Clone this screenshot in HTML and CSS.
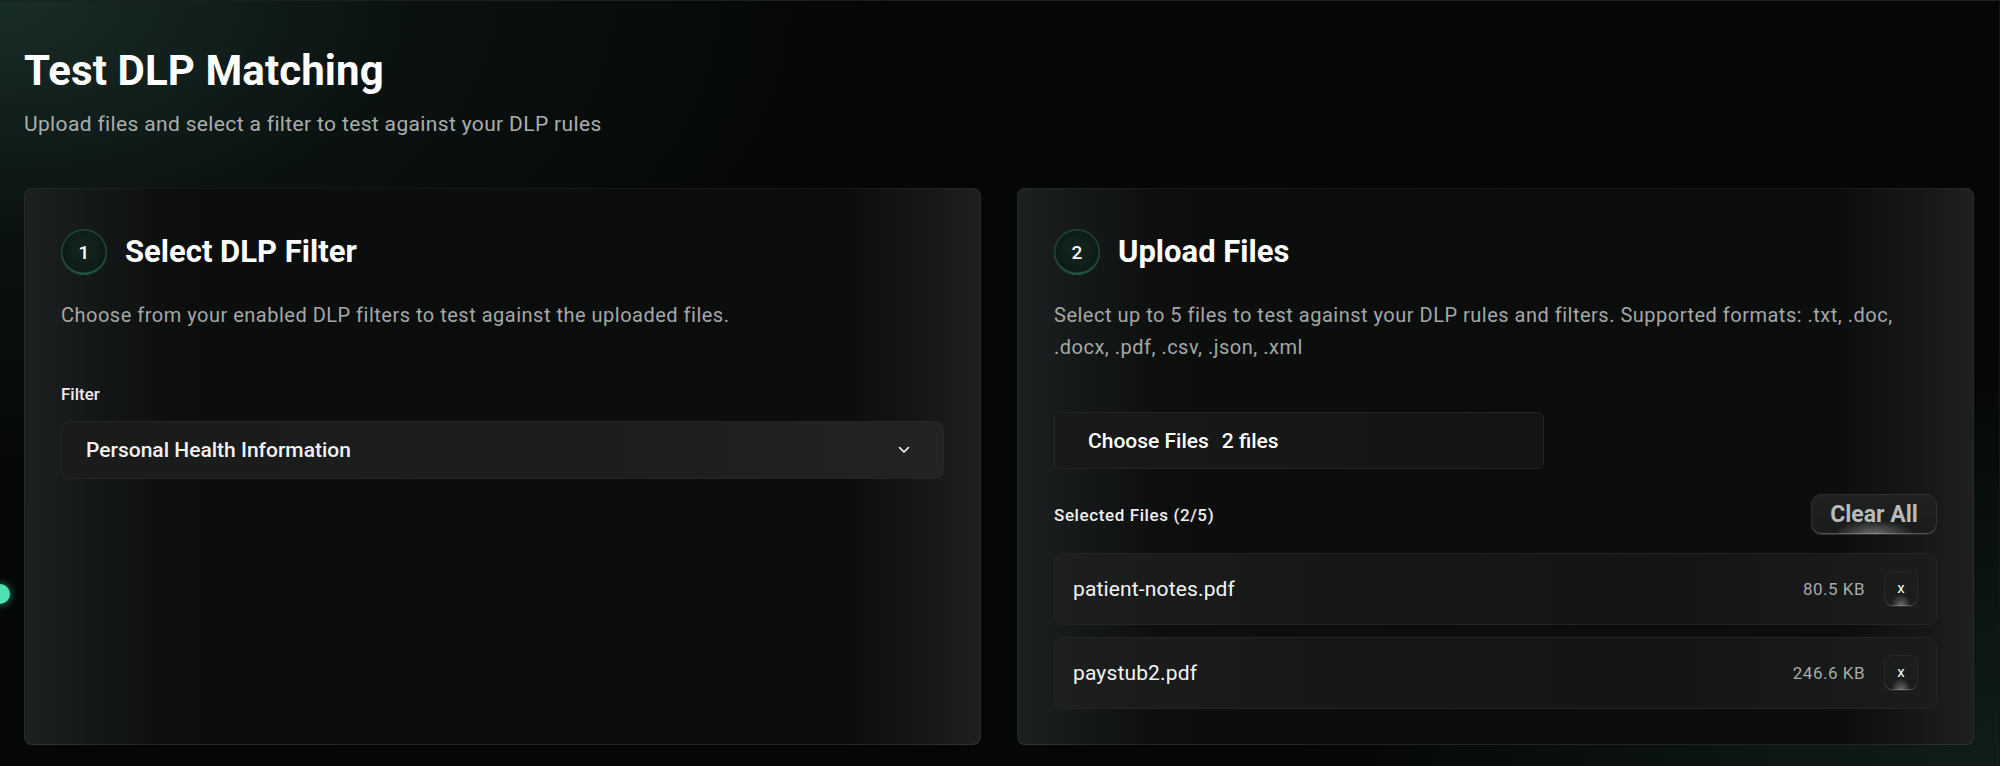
FILE: index.html
```html
<!DOCTYPE html>
<html lang="en">
<head>
<meta charset="utf-8">
<title>Test DLP Matching</title>
<link rel="stylesheet" href="styles.css">
</head>
<body>
<div class="page">
  <header class="page-head">
    <h1 class="page-title">Test DLP Matching</h1>
    <p class="page-sub">Upload files and select a filter to test against your DLP rules</p>
  </header>

  <div class="grid">
    <section class="card">
      <div class="card-head">
        <span class="step">1</span>
        <h2 class="card-title">Select DLP Filter</h2>
      </div>
      <p class="card-desc">Choose from your enabled DLP filters to test against the uploaded files.</p>
      <label class="field-label">Filter</label>
      <div class="select">
        <span class="select-value">Personal Health Information</span>
        <svg class="chev" width="12" height="8" viewBox="0 0 12 8"><path d="M1.5 1.5 L6 6 L10.5 1.5" fill="none" stroke="#fff" stroke-width="1.6" stroke-linecap="round" stroke-linejoin="round"/></svg>
      </div>
    </section>

    <section class="card">
      <div class="card-head">
        <span class="step">2</span>
        <h2 class="card-title">Upload Files</h2>
      </div>
      <p class="card-desc">Select up to 5 files to test against your DLP rules and filters. Supported formats: .txt, .doc, .docx, .pdf, .csv, .json, .xml</p>
      <div class="file-input">
        <span class="file-btn">Choose Files</span>
        <span class="file-count">2 files</span>
      </div>
      <div class="sel-head">
        <span class="sel-title">Selected Files (2/5)</span>
        <button class="btn-clear">Clear All</button>
      </div>
      <ul class="files">
        <li class="file-row">
          <span class="file-name">patient-notes.pdf</span>
          <span class="file-size">80.5 KB</span>
          <button class="btn-x">x</button>
        </li>
        <li class="file-row">
          <span class="file-name">paystub2.pdf</span>
          <span class="file-size">246.6 KB</span>
          <button class="btn-x">x</button>
        </li>
      </ul>
    </section>
  </div>
  <span class="edge-dot"></span>
</div>
</body>
</html>
```

FILE: styles.css
```css
* { box-sizing: border-box; }
html, body { margin: 0; padding: 0; }
body {
  width: 2000px;
  height: 766px;
  overflow: hidden;
  background: #050606;
  font-family: Roboto, "Liberation Sans", sans-serif;
  color: #fff;
}
.page {
  position: relative;
  height: 766px;
  border-top: 1px solid #1c1f1f;
  border-right: 1px solid #121615;
  padding: 45px 25px 0 24px;
  background:
    radial-gradient(ellipse 900px 520px at 0 0, rgba(28,52,46,0.85) 0%, rgba(16,30,27,0.5) 45%, rgba(5,6,6,0) 100%),
    radial-gradient(ellipse 700px 420px at 100% 100%, rgba(20,40,35,0.7) 0%, rgba(5,6,6,0) 100%),
    #050606;
}
.page-title {
  margin: 0;
  font-size: 42px;
  line-height: 50px;
  font-weight: 700;
  letter-spacing: 0.1px;
}
.page-sub {
  margin: 14px 0 0;
  font-size: 21px;
  line-height: 28px;
  letter-spacing: 0.35px;
  color: #a9aeac;
}
.grid {
  margin-top: 50px;
  display: grid;
  grid-template-columns: 1fr 1fr;
  gap: 36px;
}
.card {
  height: 557px;
  padding: 40px 36px 36px;
  border-radius: 8px;
  border: 1px solid rgba(255,255,255,0.05);
  border-bottom-color: rgba(255,255,255,0.09);
  background: linear-gradient(90deg, #1d2020 0%, #161919 6%, #0d0f0f 15%, #0b0d0d 50%, #0c0e0e 86%, #181a1a 96%, #1e2020 100%);
}
.card-head {
  display: flex;
  align-items: center;
  gap: 18px;
  height: 46px;
}
.step {
  width: 46px;
  height: 46px;
  border-radius: 50%;
  display: flex;
  align-items: center;
  justify-content: center;
  font-size: 19px;
  font-weight: 500;
  background: radial-gradient(circle at 50% 45%, #13261f 0%, #0d1a16 70%, #0b1512 100%);
  box-shadow: inset 0 0 0 1.5px #1d4538, inset 0 -2px 1px #3c8d6f;
}
.card-title {
  margin: 0;
  font-size: 31px;
  line-height: 36px;
  font-weight: 700;
}
.card-desc {
  margin: 24px 0 0;
  font-size: 20px;
  line-height: 32px;
  letter-spacing: 0.5px;
  color: #a4a8a6;
}
.field-label {
  display: block;
  margin-top: 53px;
  font-size: 17px;
  line-height: 20px;
  font-weight: 500;
  color: #ececec;
}
.select {
  margin-top: 17px;
  height: 58px;
  display: flex;
  align-items: center;
  justify-content: space-between;
  padding: 0 33px 0 24px;
  border-radius: 8px;
  border: 1px solid #242626;
  background: linear-gradient(90deg, #1a1b1b 0%, #1c1d1d 60%, #222323 100%);
}
.select-value {
  font-size: 21px;
  font-weight: 500;
  color: #f2f2f2;
}
.file-input {
  margin-top: 49px;
  width: 490px;
  height: 57px;
  display: flex;
  align-items: center;
  gap: 13px;
  padding-left: 33px;
  border-radius: 6px;
  border: 1px solid #232525;
  background: linear-gradient(90deg, #181919 0%, #151616 60%, #121313 100%);
  font-size: 21px;
  font-weight: 500;
}
.sel-head {
  margin-top: 25px;
  display: flex;
  align-items: center;
  justify-content: space-between;
}
.sel-title {
  font-size: 17px;
  font-weight: 500;
  letter-spacing: 0.6px;
  color: #f0f0f0;
}
.btn-clear {
  width: 126px;
  height: 41px;
  padding: 0;
  border-radius: 10px;
  border: 1px solid #2e3030;
  background:
    radial-gradient(ellipse 40px 14px at 50% 100%, rgba(255,255,255,0.35) 0%, rgba(255,255,255,0) 100%),
    linear-gradient(180deg, #202121 0%, #1a1b1b 100%);
  box-shadow: inset 0 -1px 0 rgba(255,255,255,0.25);
  font-family: inherit;
  font-size: 23px;
  font-weight: 700;
  color: #b8bbba;
}
.files {
  list-style: none;
  margin: 18px 0 0;
  padding: 0;
  display: flex;
  flex-direction: column;
  gap: 12px;
}
.file-row {
  height: 72px;
  display: flex;
  align-items: center;
  padding: 0 18px;
  border-radius: 8px;
  border: 1px solid #232525;
  background: linear-gradient(90deg, #1d1f1f 0%, #161717 30%, #141515 70%, #1b1c1c 100%);
}
.file-name {
  flex: 1;
  font-size: 21px;
  letter-spacing: 0.15px;
  color: #f4f4f4;
}
.file-size {
  font-size: 17px;
  letter-spacing: 0.5px;
  color: #a8abaa;
}
.btn-x {
  margin-left: 19px;
  width: 34px;
  height: 36px;
  padding: 0 0 3px;
  border-radius: 8px;
  border: 1px solid #262828;
  background:
    radial-gradient(ellipse 10px 12px at 50% 100%, rgba(255,255,255,0.35) 0%, rgba(255,255,255,0) 100%),
    #1b1c1c;
  box-shadow: inset 0 -1px 0 rgba(255,255,255,0.2);
  font-family: inherit;
  font-size: 15px;
  color: #fff;
}
.edge-dot {
  position: absolute;
  left: -10px;
  top: 583px;
  width: 20px;
  height: 20px;
  border-radius: 50%;
  background: #4fe0b4;
  box-shadow: 0 0 6px 2px rgba(79,224,180,0.35);
}
```
